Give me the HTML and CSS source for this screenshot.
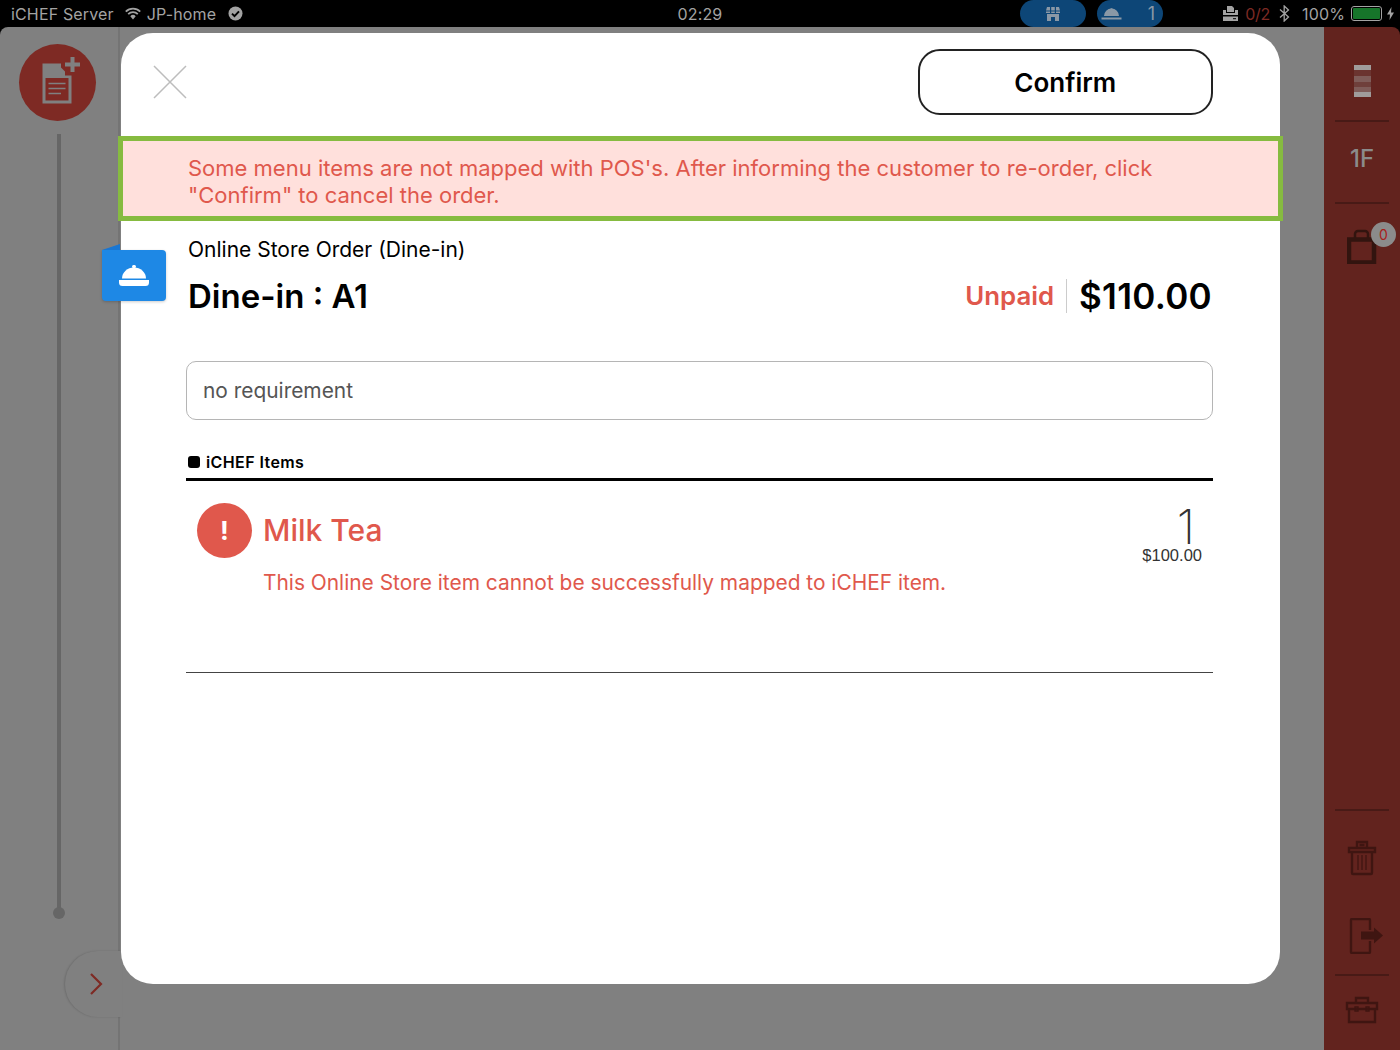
FILE: index.html
```html
<!DOCTYPE html>
<html lang="en">
<head>
    <meta charset="UTF-8">
    <title>Online Store Order</title>
    <link rel="stylesheet" href="styles.css">
</head>
<body>
    <div class="statusbar">
        <div class="status-left">
            <span>iCHEF Server</span>
            <svg class="wifi" width="16" height="13" viewBox="0 0 16 13"><path d="M.8 4.600a10.200 10.200 0 0 1 14.400 0M3.200 7.200a6.800 6.800 0 0 1 9.600 0" fill="none" stroke="#a3a3a3" stroke-width="1.800"/><path d="M5.300 9.200a3.800 3.800 0 0 1 5.400 0L8 12.500z" fill="#a3a3a3"/></svg>
            <span>JP-home</span>
            <svg class="check" width="15" height="15" viewBox="0 0 15 15"><circle cx="7.500" cy="7.500" r="7" fill="#a3a3a3"/><path d="M4 7.600l2.500 2.500L11 5.400" fill="none" stroke="#000" stroke-width="2"/></svg>
        </div>
        <div class="status-time">02:29</div>
        <div class="status-right">
            <div class="pill pill-store">
                <svg width="14" height="14" viewBox="0 0 14 14"><path d="M1 0h3v3.500H0zM5.200 0h3.600v3.500H5.200zM10 0h3l1 3.500h-4zM0 4.500h4v1.500H0zM5.200 4.500h3.600v1.500H5.200zM10 4.500h4v1.500h-4zM1 7h12v7H9v-4H5v4H1z" fill="#8a98a6"/></svg>
            </div>
            <div class="pill pill-bell">
                <svg width="21" height="12" viewBox="0 0 21 12"><path d="M3 8a7.500 7.500 0 0 1 15 0zM.5 9.500h20v2H.5z" fill="#8a98a6"/><circle cx="10.500" cy="1.500" r="1.300" fill="#8a98a6"/></svg>
                <span>1</span>
            </div>
            <svg class="printer" width="15" height="15" viewBox="0 0 15 15"><path d="M4 0h5l2 2v4H4zM0 4h3v3h9V4h3v5H0zM0 10.500h15V15H0z" fill="#a3a3a3"/><path d="M10 12.700h3" stroke="#000" stroke-width="1"/></svg>
            <span class="printer-count">0/2</span>
            <svg class="bluetooth" width="11" height="17" viewBox="0 0 11 17"><path d="M1 4.500l8.500 7.500-4.300 4V1l4.300 4L1 12.500" fill="none" stroke="#a3a3a3" stroke-width="1.300"/></svg>
            <span>100%</span>
            <div class="battery"><div class="battery-fill"></div></div>
            <svg width="7" height="13" viewBox="0 0 7 13"><path d="M4.500 0L0 7.500h3L2.500 13 7 5.500H4z" fill="#a3a3a3"/></svg>
        </div>
    </div>

    <div class="app">
        <aside class="leftbar">
            <div class="new-order">
                <svg width="46" height="52" viewBox="0 0 46 52"><path d="M8.500 6.500H27v4l4 4v4h6.500v28h-29zM11.500 21v22.500h23V21z" fill="#808080" fill-rule="evenodd"/><path d="M14.500 26.500h17M14.500 31.500h17M14.500 36.500h12.500" stroke="#808080" stroke-width="1.600"/><path d="M36.500 0h4v5.500H46v4h-5.500V15h-4V9.500H31v-4h5.500z" fill="#808080"/></svg>
            </div>
            <div class="track"></div>
            <div class="expand">
                <svg width="14" height="24" viewBox="0 0 14 24"><path d="M2 2l10 10L2 22" fill="none" stroke="#7e2a24" stroke-width="2.200"/></svg>
            </div>
        </aside>
        <main class="backdrop"></main>
        <aside class="rightbar">
            <div class="rb-top">
                <div class="stack">
                    <i class="s1"></i><i class="s0"></i><i class="s2"></i><i class="s3"></i><i class="s2"></i><i class="s1"></i>
                </div>
            </div>
            <div class="rb-floor">1F</div>
            <div class="rb-bag">
                <svg width="30" height="36" viewBox="0 0 30 36"><path d="M2 11.500h25v23H2z" fill="none" stroke="#32140f" stroke-width="4.500"/><path d="M8 10V6a3 3 0 0 1 3-3h7a3 3 0 0 1 3 3v4" fill="none" stroke="#32140f" stroke-width="2.500"/></svg>
                <span class="bag-badge">0</span>
            </div>
            <div class="rb-spacer"></div>
            <div class="rb-actions">
                <svg width="30" height="36" viewBox="0 0 30 36"><g fill="none" stroke="#3f1511" stroke-width="2.400"><path d="M2 8h26v4H2zM5 12v21a1 1 0 0 0 1 1h18a1 1 0 0 0 1-1V12zM10 8V2h10v6M12.500 5h5"/><path d="M11 15v15M15 15v15M19 15v15" stroke-width="1.300"/></g></svg>
                <svg class="door" width="36" height="36" viewBox="0 0 36 36"><path d="M21 12V2a1 1 0 0 0-1-1H3a1 1 0 0 0-1 1v32a1 1 0 0 0 1 1h17a1 1 0 0 0 1-1V23" fill="none" stroke="#3f1511" stroke-width="2.400"/><path d="M12 13.500h13v-4l9 8-9 8v-4H12z" fill="#3f1511"/></svg>
            </div>
            <div class="rb-tools">
                <svg width="34" height="28" viewBox="0 0 34 28"><g fill="none" stroke="#3f1511" stroke-width="2.400"><path d="M2 7h30v6H2zM4 13v13h26V13zM11 7V2h12v5"/><path d="M10 11h3v4h-3zM21 11h3v4h-3z" stroke-width="1.400"/></g></svg>
            </div>
        </aside>
    </div>

    <section class="modal">
        <header class="modal-head">
            <svg class="close" width="34" height="34" viewBox="0 0 34 34"><path d="M1 1l32 32M33 1L1 33" stroke="#bdbdbd" stroke-width="1.500"/></svg>
            <button class="confirm">Confirm</button>
        </header>
        <div class="alert">Some menu items are not mapped with POS's. After informing the customer to re-order, click<br>"Confirm" to cancel the order.</div>
        <div class="order-tag">
            <svg width="32" height="22" viewBox="0 0 32 22"><path d="M4 13.500a12 11 0 0 1 24 0z" fill="#fff"/><rect x="14" y="0" width="4" height="3" rx="1.500" fill="#fff"/><path d="M15 2h2v2h-2z" fill="#fff"/><path d="M1 15h30v2.500a3.500 3.500 0 0 1-3.500 3.500h-23A3.500 3.500 0 0 1 1 17.500z" fill="#fff"/></svg>
        </div>
        <div class="order-source">Online Store Order (Dine-in)</div>
        <div class="order-row">
            <h1>Dine-in : A1</h1>
            <div class="order-total">
                <span class="unpaid">Unpaid</span>
                <span class="amount">$110.00</span>
            </div>
        </div>
        <div class="requirement">no requirement</div>
        <div class="items-title"><i></i>iCHEF Items</div>
        <div class="item">
            <div class="item-warn">!</div>
            <div class="item-body">
                <div class="item-name">Milk Tea</div>
                <div class="item-note">This Online Store item cannot be successfully mapped to iCHEF item.</div>
            </div>
            <div class="item-price">
                <div class="item-qty">1</div>
                <div class="item-sum">$100.00</div>
            </div>
        </div>
    </section>
</body>
</html>
```

FILE: styles.css
```css
* {
    box-sizing: border-box;
}
html, body {
    height: 100%;
}
body {
    margin: 0;
    height: 1050px;
    overflow: hidden;
    background: #000;
    font-family: Inter, "Liberation Sans", sans-serif;
    color: #000;
}

/* status bar */
.statusbar {
    height: 27px;
    display: grid;
    grid-template-columns: 1fr auto 1fr;
    align-items: center;
    padding: 0 11px;
    color: #a3a3a3;
    font-size: 16px;
    letter-spacing: 0.15px;
}
.status-left, .status-right {
    display: flex;
    align-items: center;
}
.status-left svg.wifi {
    margin: 0 6px 0 11px;
}
.status-left svg.check {
    margin-left: 12px;
}
.status-right {
    justify-content: flex-end;
    margin-right: -5px;
}
.status-right > span {
    margin-right: 6px;
}
.pill {
    width: 66px;
    height: 27px;
    border-radius: 14px;
    background: #0d4677;
    display: flex;
    align-items: center;
    color: #8a98a6;
    font-size: 18px;
    margin-right: 11px;
}
.pill-store {
    justify-content: center;
}
.pill-bell {
    justify-content: space-between;
    padding: 0 8px 0 4px;
    margin-right: 60px;
}
.printer {
    margin-right: 7px;
}
.status-right .printer-count {
    color: #7d2a24;
    letter-spacing: -0.3px;
    margin-right: 9px;
}
.bluetooth {
    margin-right: 12px;
}
.battery {
    width: 31px;
    height: 15px;
    border: 1px solid #a3a3a3;
    border-radius: 3px;
    padding: 1px;
    margin-right: 5px;
}
.battery-fill {
    height: 100%;
    background: #16752a;
    border-radius: 1px;
}

/* screen behind the dialog */
.app {
    height: 1023px;
    display: flex;
}
.leftbar {
    width: 120px;
    background: #808080;
    border-radius: 8px 0 0 0;
    border-right: 2px solid #747474;
    position: relative;
    display: flex;
    flex-direction: column;
    align-items: center;
    padding: 17px 4px 0 0;
}
.new-order {
    width: 77px;
    height: 77px;
    border-radius: 50%;
    background: #7e2a24;
    display: flex;
    align-items: center;
    justify-content: center;
}
.track {
    width: 4px;
    height: 779px;
    margin: 13px 0 0 4px;
    background: #666;
    position: relative;
}
.track::after {
    content: "";
    position: absolute;
    left: -4px;
    bottom: -6px;
    width: 12px;
    height: 12px;
    border-radius: 50%;
    background: #666;
}
.expand {
    position: absolute;
    left: 65px;
    top: 924px;
    width: 57px;
    height: 66px;
    border-radius: 33px 0 0 33px;
    background: #808080;
    box-shadow: -1px 0 2px rgba(0, 0, 0, 0.15);
    display: flex;
    align-items: center;
    padding-left: 24px;
}
.backdrop {
    flex: 1;
    background: #808080;
}
.rightbar {
    width: 76px;
    background: #62231e;
    border-radius: 0 8px 0 0;
    display: flex;
    flex-direction: column;
    align-items: center;
}
.rb-top, .rb-floor, .rb-bag, .rb-actions {
    width: 54px;
    display: flex;
    align-items: center;
    justify-content: center;
    border-bottom: 2px solid #481a16;
}
.rb-top {
    height: 95px;
    padding-top: 15px;
}
.stack {
    width: 17px;
    display: flex;
    flex-direction: column;
}
.stack i {
    height: 5px;
    display: block;
}
.stack .s0 {
    height: 6px;
    background: #6b3430;
}
.stack .s1 {
    background: #a09c9b;
}
.stack .s2 {
    background: #7f5c59;
    height: 5.500px;
}
.stack .s3 {
    background: #6f3f3b;
}
.rb-floor {
    height: 82px;
    color: #8b8b8b;
    font-size: 24px;
    font-weight: 500;
    padding-bottom: 7px;
}
.rb-bag {
    height: auto;
    border: 0;
    padding: 24px 0 0 0;
    position: relative;
}
.bag-badge {
    position: absolute;
    top: 18px;
    left: 36px;
    width: 25px;
    height: 25px;
    border-radius: 50%;
    background: #8b8b8b;
    color: #a8211a;
    font-size: 14px;
    text-align: center;
    line-height: 25px;
}
.rb-spacer {
    flex: 1;
}
.rb-actions {
    height: 167px;
    flex-direction: column;
    justify-content: flex-start;
    border-top: 2px solid #481a16;
    padding: 29px 0 0 0;
    gap: 42px;
}
.door {
    margin-left: 10px;
    flex: none;
}
.rb-tools {
    height: 74px;
    padding-top: 20px;
}

/* dialog */
.modal {
    position: absolute;
    left: 121px;
    top: 33px;
    width: 1159px;
    height: 951px;
    background: #fff;
    border-radius: 32px;
    padding-top: 16px;
}
.modal-head {
    height: 87px;
    display: flex;
    justify-content: space-between;
    align-items: flex-start;
    padding: 0 67px 0 32px;
}
.close {
    margin-top: 16px;
}
.confirm {
    width: 295.500px;
    height: 66px;
    background: #fff;
    border: 2px solid #222;
    border-radius: 22px;
    font: 600 26px Inter, "Liberation Sans", sans-serif;
    color: #000;
}
.alert {
    margin: 0 -3px 0 -3px;
    height: 85px;
    background: #ffe0dc;
    border: 5px solid #86bb40;
    padding: 14px 0 0 65px;
    color: #e0584c;
    font-size: 22px;
    line-height: 27px;
}
.order-tag {
    position: absolute;
    left: -19px;
    top: 217px;
    width: 64px;
    height: 51px;
    background: #1e88e5;
    border-radius: 0 4px 4px 4px;
    box-shadow: 0 1px 3px rgba(0, 0, 0, 0.2);
    display: flex;
    align-items: center;
    justify-content: center;
}
.order-tag::before {
    content: "";
    position: absolute;
    left: 0;
    top: -6px;
    border-bottom: 6px solid #1976d2;
    border-left: 18px solid transparent;
}
.order-source {
    margin: 15px 0 0 67px;
    font-size: 21px;
    line-height: 27px;
}
.order-row {
    display: flex;
    justify-content: space-between;
    align-items: center;
    margin: 13px 68px 0 67px;
    height: 40px;
}
.order-row h1 {
    margin: 0;
    font-size: 33px;
    font-weight: 600;
}
.order-total {
    display: flex;
    align-items: center;
}
.unpaid {
    color: #e0584c;
    font-size: 25.800px;
    font-weight: 600;
    padding-right: 12px;
    border-right: 1px solid #ccc;
    line-height: 34px;
}
.amount {
    font-size: 35px;
    font-weight: 600;
    letter-spacing: 0.3px;
    padding-left: 12px;
}
.requirement {
    height: 59px;
    margin: 45px 67px 0 65px;
    border: 1px solid #b5b5b5;
    border-radius: 10px;
    padding-left: 16px;
    display: flex;
    align-items: center;
    color: #555;
    font-size: 20.900px;
}
.items-title {
    margin: 32px 67px 0 65px;
    height: 29px;
    border-bottom: 3px solid #000;
    display: flex;
    align-items: flex-start;
    padding-left: 2px;
    font-size: 16px;
    font-weight: 600;
    letter-spacing: 0.4px;
    line-height: 20px;
}
.items-title i {
    width: 12px;
    height: 12px;
    background: #000;
    border-radius: 3px;
    margin: 4px 6px 0 0;
}
.item {
    margin: 0 67px 0 65px;
    height: 192px;
    border-bottom: 1px solid #444;
    display: flex;
    padding: 22px 11px 0 11px;
    position: relative;
}
.item-warn {
    width: 55px;
    height: 55px;
    border-radius: 50%;
    background: #e0584c;
    color: #fff;
    font-size: 26px;
    font-weight: 700;
    display: flex;
    align-items: center;
    justify-content: center;
    flex: none;
}
.item-body {
    flex: 1;
    margin-left: 11px;
    color: #e0584c;
}
.item-name {
    font-size: 30px;
    font-weight: 500;
    line-height: 55px;
}
.item-note {
    font-size: 20.900px;
    line-height: 27px;
    margin-top: 11px;
}
.item-price {
    text-align: right;
    color: #333;
}
.item-qty {
    font-size: 48px;
    font-weight: 200;
    line-height: 42px;
    margin-top: 3px;
    padding-right: 7px;
}
.item-sum {
    font-family: "Liberation Sans", sans-serif;
    font-size: 16.500px;
    line-height: 20px;
    margin-top: -3px;
}
```
